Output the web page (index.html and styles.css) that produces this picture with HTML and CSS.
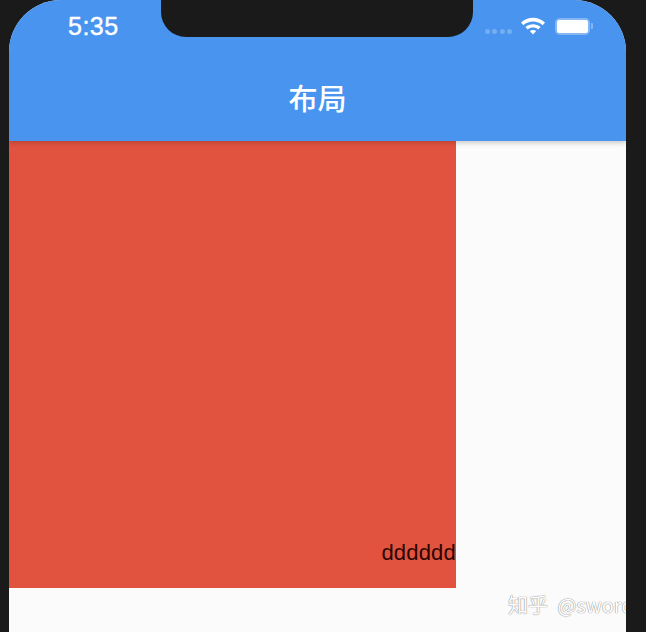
FILE: index.html
```html
<!DOCTYPE html>
<html lang="en">
<head>
  <meta charset="UTF-8" />
  <title>布局</title>
  <link rel="stylesheet" href="styles.css">
</head>
<body>
  <div class="phone">
    <div class="appbar">
      <div class="statusbar">
        <span class="time">5:35</span>
        <div class="status-icons">
          <div class="signal">
            <i></i><i></i><i></i><i></i>
          </div>
          <svg class="wifi" width="24" height="18" viewBox="0 0 24 18">
            <path d="M0 5.6C6.5 -0.8 17.5 -0.8 24 5.6L21.6 8.2C16.2 3.2 7.8 3.2 2.4 8.2Z" fill="#fff"/>
            <path d="M4.4 10C8.6 6.3 15.4 6.3 19.6 10L17.2 12.4C14.2 9.9 9.8 9.9 6.8 12.4Z" fill="#fff"/>
            <path d="M8.8 14C10.6 12.7 13.4 12.7 15.2 14L12 17.6Z" fill="#fff"/>
          </svg>
          <div class="battery">
            <div class="battery-body"><div class="battery-fill"></div></div>
            <div class="battery-cap"></div>
          </div>
        </div>
      </div>
      <div class="title">布局</div>
    </div>
    <div class="notch"></div>
    <div class="content">
      <div class="redbox">
        <span class="redbox-text">dddddd</span>
      </div>
    </div>
    <div class="watermark">知乎 @sword</div>
  </div>
</body>
</html>
```

FILE: styles.css
```css
html, body {
  height: 100%;
}

body {
  margin: 0;
  background: #1a1a1a;
  font-family: "Liberation Sans", Arial, sans-serif;
  overflow: hidden;
}

.phone {
  position: relative;
  width: 617px;
  height: 632px;
  margin-left: 9px;
  background: #fbfbfb;
  border-radius: 52px 52px 0 0;
  overflow: hidden;
}

.notch {
  position: absolute;
  top: 0;
  left: 152px;
  width: 312px;
  height: 37px;
  background: #1a1a1a;
  border-radius: 0 0 25px 25px;
}

.appbar {
  position: relative;
  height: 141px;
  background: #4894ee;
  box-shadow: 0 2px 5px rgba(0,0,0,0.2);
}

.statusbar {
  display: flex;
  justify-content: space-between;
  align-items: center;
  height: 52px;
  padding: 0 33px 0 59px;
}

.time {
  color: white;
  font-size: 25px;
  letter-spacing: 0.5px;
  -webkit-text-stroke: 0.4px white;
}

.status-icons {
  display: flex;
  align-items: center;
}

.signal {
  display: flex;
  gap: 2.5px;
  margin-top: 11px;
  margin-right: 9px;
}

.signal i {
  display: block;
  width: 5px;
  height: 5px;
  border-radius: 50%;
  background: #75aff2;
}

.wifi {
  margin-top: -1px;
  margin-right: 10px;
}

.battery {
  display: flex;
  align-items: center;
}

.battery-body {
  width: 31px;
  height: 13px;
  border: 2px solid #85b8f3;
  border-radius: 5px;
  margin-right: 1px;
}

.battery-fill {
  height: 100%;
  background: white;
  border-radius: 2px;
}

.battery-cap {
  width: 2px;
  height: 6px;
  background: #85b8f3;
  border-radius: 0 1px 1px 0;
}

.title {
  text-align: center;
  color: white;
  font-family: "Noto Sans CJK SC", sans-serif;
  font-size: 29px;
  font-weight: 500;
  line-height: 40px;
  margin-top: 25px;
}

.redbox {
  width: 447px;
  height: 447px;
  background: #e2533f;
  display: flex;
  justify-content: flex-end;
  align-items: flex-end;
  overflow: hidden;
}

.redbox-text {
  color: #2a0500;
  font-family: "Liberation Sans", Arial, sans-serif;
  font-size: 22px;
  letter-spacing: 0.2px;
  line-height: 26px;
  margin-bottom: 22px;
  white-space: nowrap;
}

.watermark {
  position: absolute;
  left: 499px;
  top: 592px;
  color: #fff;
  font-family: "Noto Sans CJK SC", sans-serif;
  font-size: 20px;
  line-height: 26px;
  word-spacing: 5px;
  white-space: nowrap;
  text-shadow: 0 0 1px #8a8a8a, 0 0 1px #8a8a8a;
}
```
